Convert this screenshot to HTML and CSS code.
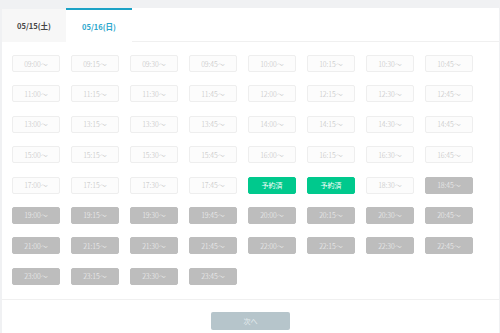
FILE: index.html
```html
<!DOCTYPE html>
<html lang="ja">
<head>
  <meta charset="UTF-8" />
  <title>予約時間選択</title>
  <link rel="stylesheet" href="styles.css">
</head>
<body>
  <div class="card">
    <div class="tabs">
      <div class="tab">05/15(土)</div>
      <div class="tab active">05/16(日)</div>
    </div>
    <div class="slots" id="slots"></div>
    <div class="footer">
      <button class="next">次へ</button>
    </div>
  </div>
  <script>
    const slots = document.getElementById('slots');
    const booked = ['18:00', '18:15'];
    for (let h = 9; h <= 23; h += 2) {
      for (let d = 0; d < 2; d++) {
        for (let m = 0; m < 60; m += 15) {
          const hour = h + d;
          if (hour > 23) continue;
          const t = String(hour).padStart(2, '0') + ':' + String(m).padStart(2, '0');
          const b = document.createElement('div');
          b.className = 'slot';
          if (booked.includes(t)) {
            b.classList.add('booked');
            b.innerText = '予約済';
          } else {
            if (hour >= 19 || t === '18:45') b.classList.add('closed');
            b.innerText = t + '〜';
          }
          slots.appendChild(b);
        }
      }
    }
  </script>
</body>
</html>
```

FILE: styles.css
```css
* { box-sizing: border-box; margin: 0; padding: 0; }
body { background: #f0f1f3; font-family: "Noto Sans CJK JP", "Noto Sans", sans-serif; padding-top: 8px; width: 500px; height: 333px; overflow: hidden; }
.card { background: #fff; margin: 0 1px 0 2px; height: 325px; }
.tabs { display: flex; border-bottom: 1px solid #f0f0f0; height: 34px; }
.tab { width: 64px; height: 34px; background: #f7f7f7; border-top: 1px solid #f0f1f3; font-size: 7.5px; font-weight: bold; color: #444; display: flex; align-items: center; justify-content: center; }
.tab.active { width: 66px; background: #fff; border-top: 2px solid #1ba2c6; color: #2aa6cc; }
.slots { display: grid; grid-template-columns: repeat(8, 48px); column-gap: 11px; row-gap: 13.4px; padding: 13px 0 14px 10px; border-bottom: 1px solid #f0f0f0; }
.slot { height: 17px; border: 1px solid #eeeeee; border-radius: 2px; background: #fcfcfc; color: #c0c0c0; font-size: 7px; font-weight: 300; display: flex; align-items: center; justify-content: center; }
.slot.closed { background: #bdbdbd; border-color: #bdbdbd; color: #f2f2f2; }
.slot.booked { background: #00c98d; border-color: #00c98d; color: #fff; font-weight: 400; }
.footer { display: flex; justify-content: center; padding-top: 12px; }
.next { width: 79px; height: 18px; border: none; border-radius: 2px; background: #b6c5cb; color: #e6eef0; font-size: 7px; font-family: inherit; }
```
